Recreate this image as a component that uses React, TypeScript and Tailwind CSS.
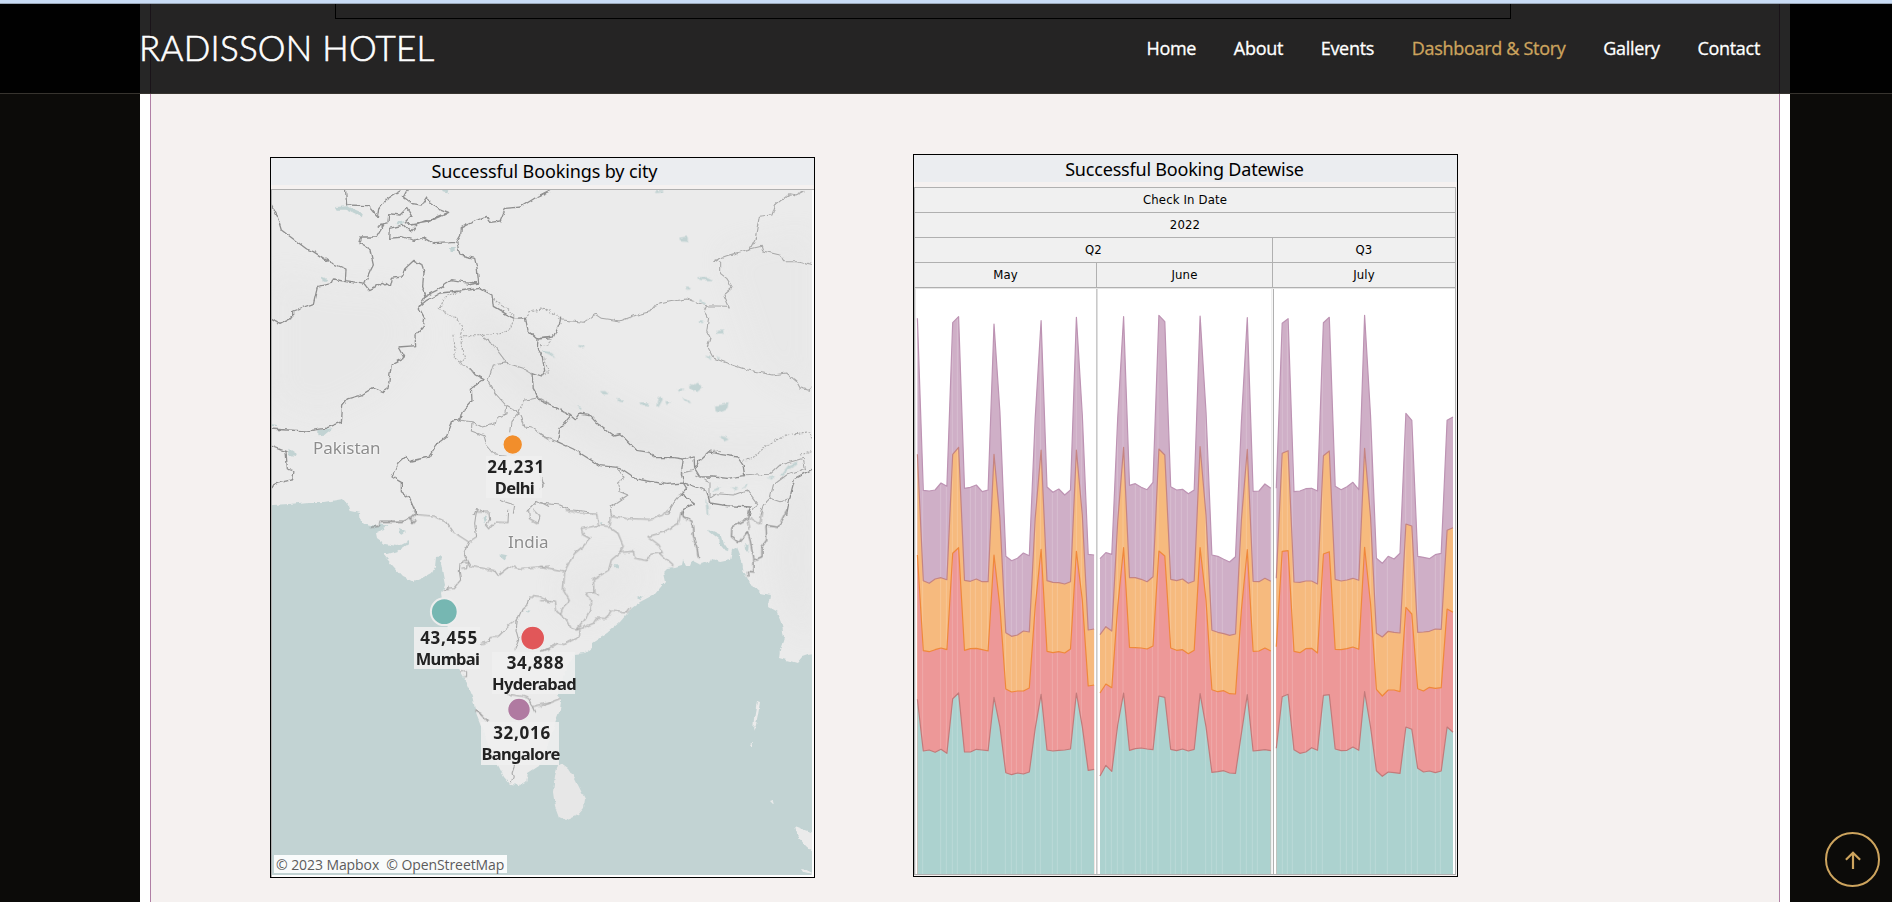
import React from "react";

const NAV = ["Home", "About", "Events", "Dashboard & Story", "Gallery", "Contact"];

type Month = {
  x: number;
  purple: number[];
  orange: number[];
  red: number[];
  teal: number[];
};

// Heights are stored in thirds of a pixel, measured down from y = 510.
const MONTHS: Month[] = [
  {
    x: 917.4,
    purple: [-575, -59, -57, -60, -81, -71, -562, -580, -65, -68, -75, -55, -60, -558, -295, 139, 152, 145, 129, 137, -275, -568, -69, -53, -63, -45, -60, -578, -285, 133, 135],
    orange: [-167, 212, 220, 207, 203, 209, -167, -188, 211, 214, 207, 215, 215, -167, 25, 368, 379, 375, 363, 366, 25, -180, 212, 217, 218, 222, 215, -180, 15, 360, 357],
    red: [135, 422, 425, 419, 414, 419, 130, 113, 421, 416, 415, 419, 423, 135, 290, 537, 546, 543, 543, 534, 290, 118, 424, 428, 425, 429, 417, 124, 270, 528, 525],
    teal: [568, 723, 720, 727, 718, 730, 566, 549, 726, 726, 718, 720, 722, 562, 650, 788, 794, 789, 792, 786, 655, 553, 720, 723, 721, 720, 717, 549, 650, 781, 778],
  },
  {
    x: 1100,
    purple: [146, 128, 133, -275, -580, -74, -79, -68, -61, -83, -584, -565, -70, -60, -62, -49, -60, -582, -295, 135, 139, 148, 156, 140, -265, -577, -56, -57, -78, -65],
    orange: [374, 350, 363, 35, -188, 203, 203, 208, 215, 200, -183, -165, 208, 212, 207, 220, 213, -190, 15, 361, 367, 371, 376, 372, 30, -182, 214, 215, 205, 214],
    red: [549, 522, 533, 290, 113, 412, 413, 414, 417, 408, 123, 138, 414, 421, 419, 431, 421, 113, 270, 539, 545, 542, 551, 552, 300, 119, 424, 423, 414, 423],
    teal: [798, 766, 784, 645, 549, 721, 716, 714, 717, 719, 558, 562, 718, 722, 717, 723, 718, 551, 650, 787, 785, 782, 789, 790, 670, 554, 723, 721, 719, 722],
  },
  {
    x: 1276.3,
    purple: [-65, -560, -574, -55, -57, -64, -65, -57, -562, -578, -71, -61, -70, -83, -61, -584, -285, 145, 160, 139, 147, 130, -290, -269, 139, 142, 146, 134, 130, -269, -279],
    orange: [205, -170, -178, 216, 217, 213, 213, 222, -163, -177, 208, 213, 210, 205, 211, -185, 20, 370, 381, 364, 367, 369, 42, 48, 367, 366, 364, 357, 358, 61, 53],
    red: [410, 124, 122, 424, 428, 416, 415, 429, 132, 125, 418, 419, 416, 411, 418, 112, 280, 538, 558, 540, 540, 545, 292, 312, 536, 543, 532, 535, 533, 297, 307],
    teal: [715, 560, 553, 719, 730, 726, 713, 721, 556, 554, 717, 722, 721, 711, 721, 545, 650, 782, 799, 786, 788, 790, 651, 658, 775, 786, 783, 788, 783, 651, 667],
  },
];

const STEP = 5.89;
const pts = (m: Month, v: number[]) =>
  v.map((y, i) => `${(m.x + i * STEP).toFixed(1)},${(510 + y / 3).toFixed(1)}`);
const area = (m: Month, top: number[]) => {
  const end = m.x + (top.length - 1) * STEP;
  return `M${m.x},874 L${pts(m, top).join(" L")} L${end.toFixed(1)},874Z`;
};
const line = (m: Month, v: number[]) => `M${pts(m, v).join(" L")}`;

const STREAKS = [
  68, 122, 139, 157, 172, 211, 226, 244, 263, 316, 334, 349, 367, 406, 421, 457, 472, 512, 529, 544,
  617, 634, 652, 669, 706, 721, 739, 757, 774, 812, 826, 844, 862, 917, 935, 949, 967, 1021, 1039, 1057, 1072,
  1147, 1162, 1177, 1216, 1234, 1249, 1267, 1321, 1339, 1357, 1372, 1411, 1426, 1462, 1517, 1534, 1552, 1606, 1621,
].map((v) => 900 + v / 3);

function AreaChart() {
  return (
    <svg viewBox="915 288 540 586" className="block h-[586px] w-[540px] bg-white">
      <defs>
        <clipPath id="bands">
          {MONTHS.map((m) => (
            <path key={m.x} d={area(m, m.purple)} />
          ))}
        </clipPath>
      </defs>
      {MONTHS.map((m) => (
        <g key={m.x} strokeLinejoin="round">
          <path d={area(m, m.purple)} fill="#cfafc7" />
          <path d={area(m, m.orange)} fill="#f6ba7e" />
          <path d={area(m, m.red)} fill="#ed9898" />
          <path d={area(m, m.teal)} fill="#acd2cf" />
        </g>
      ))}
      <g clipPath="url(#bands)" stroke="#ffffff" strokeOpacity=".18" strokeWidth="1">
        {STREAKS.map((x) => (
          <path key={x} d={`M${x},288V874`} />
        ))}
      </g>
      {MONTHS.map((m) => (
        <g key={m.x} fill="none" strokeWidth="1.2" strokeLinejoin="round">
          <path d={line(m, m.purple)} stroke="#bd93b3" />
          <path d={line(m, m.orange)} stroke="#c58482" />
          <path d={line(m, m.red)} stroke="#f0883a" />
          <path d={line(m, m.teal)} stroke="#c37a7a" />
        </g>
      ))}
      <path d="M1096.8 288V874" stroke="#c9c9c9" strokeWidth="1.6" />
      <path d="M1273.5 288V874" stroke="#b0b0b0" strokeWidth="1" />
      <path d="M1271.8 288V874" stroke="#ebebeb" strokeWidth="1.2" />
      <path d="M915.5 288V874M915 288.5H1455" stroke="#e6e6e6" />
    </svg>
  );
}

const COAST =
  "M258,176H826V652L808,655L802,657L797,663L790,661L779,658L780,650L784,638L782,625L777,612L768,607L770,595L760,593L753,587L744,573L741,557L737,547L732,550L730,560L720,562L712,559L710,564L703,561L700,565L692,561L690,566L686,566L683,560L682,565L675,567L668,568L663,573L665,582L655,594L640,602L632,608L620,622L607,633L592,643L592,648L585,653L575,654L568,664L562,680L557,695L561,700L560,710L556,720L548,745L539,766L528,773L526,782L518,786L511,785L504,777L499,767L493,757L480,723L475,710L472,695L467,683L463,677L457,667L447,625L442,593L445,585L443,575L441,563L442,556L436,557L435,567L432,573L423,578L414,582L403,577L393,566L383,554L388,554L398,551L407,545L409,540L397,546L385,544L377,538L376,533L384,530L387,524L377,526L371,525L361,523L360,513L350,511L348,505L343,499L325,502L308,502L290,504L258,506Z";

function IndiaMap() {
  return (
    <svg viewBox="272 190 540 685" className="block h-[685px] w-[540px] bg-[#c2d3d3]">
      <defs>
        <filter
          id="rough"
          x="258"
          y="176"
          width="568"
          height="713"
          filterUnits="userSpaceOnUse"
          colorInterpolationFilters="sRGB"
        >
          <feTurbulence type="fractalNoise" baseFrequency=".15" numOctaves="2" seed="4" />
          <feDisplacementMap in="SourceGraphic" scale="4.4" xChannelSelector="R" yChannelSelector="G" />
        </filter>
        <filter id="soft" x="258" y="176" width="568" height="713" filterUnits="userSpaceOnUse">
          <feGaussianBlur stdDeviation="14" />
        </filter>
        <clipPath id="land">
          <path d={COAST} />
        </clipPath>
      </defs>
      <g filter="url(#rough)">
        <path d={COAST} fill="#ebebeb" />
        <path d="M561,763L568,768L575,779L581,791L585,799L584,808L578,815L566,820L559,817L555,806L553,792L555,776L558,765Z" fill="#e7e7e7" />
        <path d="M757,701L760,702L758,714L756,724L753,732L754,718ZM750,744L752,743L752,747ZM770,801L773,800L774,805ZM795,826L803,829L816,834V855L806,846L798,837ZM802,869L808,870L812,874L804,872Z" fill="#ebebeb" />
      </g>
      <g clipPath="url(#land)">
        <g filter="url(#soft)" fill="#dfdfdf" opacity=".38">
          <path d="M272,270L330,285L400,290L420,340L380,390L320,420L272,400Z" opacity=".5" />
          <path d="M470,300L530,340L600,395L700,445L790,440L780,460L690,470L600,450L520,400L470,350Z" />
          <path d="M720,250L812,230V400L760,370Z" opacity=".6" />
          <path d="M790,480L812,470V640L785,610L775,560Z" />
          <path d="M560,570L600,560L640,560L640,590L590,620L560,610Z" opacity=".7" />
        </g>
      </g>
      <g filter="url(#rough)" fill="#c2d3d3">
        <g transform="translate(260 145) scale(.33333)">
          <path d="M225,186L262,184L300,200L308,208L306,220L290,208L262,194L230,194ZM545,134L565,136L562,145L548,142ZM412,230L432,226L430,238L410,238ZM570,306L584,306L584,318L572,318ZM186,398L202,404L198,410L188,410ZM172,856L218,850L190,872L172,874ZM82,908L110,926L108,936L86,932ZM36,838L54,840L54,844L36,843ZM850,618L870,620L870,625L852,624Z" />
        </g>
        <g transform="translate(540 145) scale(.33333)">
          <path d="M345,136L370,136L368,142L350,144ZM418,278L442,275L444,288L420,286ZM474,396L500,396L518,406L480,405ZM438,424L452,426L450,434L438,434ZM480,462L500,478L494,480L478,468ZM472,526L490,526L484,536ZM530,554L550,554L550,566L532,566ZM114,600L134,602L130,610L118,606ZM10,620L36,624L46,636L34,632ZM498,632L516,636L512,645ZM530,628L540,640L534,642ZM450,724L470,710L488,728L470,742L452,732ZM180,738L196,738L206,748L188,748ZM232,762L250,764L246,772L234,770ZM298,772L326,772L322,784L304,782ZM352,784L356,760L366,754L368,764L356,786ZM376,768L390,770L380,780ZM414,732L432,730L428,738L416,740ZM426,756L446,768L450,776L436,770ZM528,782L566,774L562,790L540,800L530,796ZM112,784L122,784L120,796ZM538,872L556,876L566,884L552,890ZM722,990L744,962L776,948L770,960L744,974L728,992ZM680,998L702,994L696,1004ZM520,1034L542,1026L540,1034L522,1038ZM570,1026L596,1030L586,1036ZM604,1028L624,1016L620,1024ZM496,1060L506,1080L508,1110L500,1110Z" />
        </g>
        <g transform="translate(260 510) scale(.33333)">
          <path d="M415,56L438,66L428,74L416,68ZM668,25L684,14L680,30L672,40ZM722,132L742,136L734,152L724,146ZM796,300L812,302L804,308ZM350,50L362,40L382,44L366,60Z" />
        </g>
        <g transform="translate(540 510) scale(.33333)">
          <path d="M504,56L545,76L552,100L566,120L558,126L540,104L538,88L510,66ZM616,98L626,104L624,126L618,118ZM220,166L238,166L232,176ZM290,264L310,256L302,270ZM182,38L190,36L188,46Z" />
        </g>
      </g>
      <g filter="url(#rough)" fill="none" stroke="#8f8f8f" strokeWidth="3.9" strokeLinejoin="round">
        <g transform="translate(260 145) scale(.33333)">
          <path d="M30,170L50,210L64,255L140,312L160,320L210,352L258,372L256,410M26,518L60,538L98,518L98,498L160,476L172,424L214,416L220,402L256,410L314,418L326,434L370,412L388,424L394,400L426,396L434,372L462,346L484,358L492,380L488,425L498,452L530,436L575,404L610,410L656,414L652,376L644,340L600,330L590,292L520,296L490,278L462,286L430,276L386,280L388,250L430,240L452,262L470,240L566,202L536,190L510,172L500,156L484,180L458,176L430,156L444,130M256,126L260,180L324,182L352,216L356,192L376,166L400,150L430,132M314,418L330,380L340,360L330,314L296,294L302,276L350,276L370,242L352,244L384,236L386,206L420,210L440,190L454,212L436,230L452,240L500,232L540,216L566,202M590,292L602,272L604,248L644,228L680,214L692,232L720,228L736,190L782,186L830,156L870,138" />
          <path d="M498,452L476,486L494,520L490,544L468,570L470,602L414,606L432,638L394,658L384,730L370,740L340,728L304,750L262,762L248,780L244,832L196,850L140,858L26,852M476,486L500,466L540,444L600,438L660,430L696,450L700,484L740,508L766,520L796,518L804,556L834,582L832,610L846,630L854,680L844,696L816,686L820,730L838,764L868,775M834,582L870,578M620,420L656,414M26,900L78,920L82,972L102,978L98,1004L60,1012L26,1030" />
          <path d="M630,670L646,690L672,704L634,730L636,768L606,802L600,824L578,828L558,878L530,900L506,936L452,948L440,932L414,956L396,996L424,1012L424,1040L448,1058L470,1110" />
        </g>
        <g transform="translate(540 145) scale(.33333)">
          <path d="M0,768L50,790L92,812L106,824L120,804L146,808L166,830L220,870L240,866L290,916L330,922L340,938L400,938L430,942L462,932L464,970L480,996L520,996L560,1000L614,992L610,962L592,936L540,928L506,920L480,944L464,970M92,812L60,850L52,890L100,912L180,962L240,968L290,1002L380,1018L430,1014L450,1020L500,1038L510,1074L560,1082L634,1086L628,1110M430,1014L424,985L430,942M430,1014L440,1030L424,1046L466,1076L430,1090L424,1110M826,968L764,1000L754,1040L740,1110M0,150L40,130M0,580L40,576L60,530L62,518" />
        </g>
        <g transform="translate(260 510) scale(.33333)">
          <path d="M333,52L358,48L360,34L430,34L452,24L466,12L460,0M646,602L664,612L686,636M452,24L456,38L466,28" />
        </g>
        <g transform="translate(540 510) scale(.33333)">
          <path d="M424,0L430,20L456,34L460,80L470,110L476,146M628,0L622,26L594,42L576,50L574,80L596,98L622,64L630,90L642,150L642,186L622,184L624,200M740,0L714,52L678,46L680,90L666,110L666,140L644,150" />
        </g>
      </g>
      <g filter="url(#rough)" fill="none" stroke="#a8a8a8" strokeWidth="3.2" strokeLinejoin="round">
        <g transform="translate(260 145) scale(.33333)">
          <path d="M666,574L700,600L730,640L740,654L790,670L816,686M740,654L700,660L690,690L684,704L710,750L740,784L776,804L790,766L840,758L870,775M740,784L738,806L710,820L706,836L666,846L636,830L600,826M636,830L634,858L672,872L680,900L706,930L740,934M776,804L756,830L752,862M776,804L794,846L820,850L850,874L870,888M720,1066L764,1080L760,1106M800,1100L830,1066L870,1086M642,1110L650,1090L672,1104M840,1005L850,1020L840,1034" />
          <path d="M604,442L560,450L538,490L556,504L590,520L610,546L600,572L660,572L720,566L752,550L762,520M600,572L606,610L614,640L600,650L640,680M582,572L586,640L610,662M700,462L736,490L766,514M796,518L810,500L870,492" strokeDasharray="6 4" />
        </g>
        <g transform="translate(540 145) scale(.33333)">
          <path d="M62,524L130,532L166,508L184,520L240,528L290,510L330,500L346,480L390,470L440,462L500,482L560,484L568,486L552,450L578,428L560,400L542,386L542,352L524,346L560,332L630,312L664,304L668,318L720,330L734,350L770,350L826,364M630,312L646,280L658,214L696,210L706,180L750,146L768,150L796,136M500,482L492,500L506,520L500,560L510,580L502,604L522,640L560,654L620,674L700,690L740,684L770,710L780,728L806,736L816,722" />
          <path d="M230,964L252,1000L236,1014L240,1040L264,1050L210,1086L214,1110M0,870L52,890M424,985L462,976M466,990L510,1010L510,1060L530,1046L580,1050L620,1036L650,1076L640,1094M614,992L690,988L720,960L790,940L796,970L740,990L700,1020L690,1060L670,1080L660,1110M690,1060L720,1070L750,1060M0,990L8,1020L0,1034M0,1074L60,1080L90,1094L150,1100M424,1046L400,1076L380,1110" />
          <path d="M0,492L20,494L60,522M0,602L24,600L30,582M14,640L24,680L0,695M600,948L640,940L680,900L740,870L810,860L816,884M510,918L546,920M780,930L816,920" strokeDasharray="6 4" />
        </g>
        <g transform="translate(260 510) scale(.33333)">
          <path d="M470,14L520,18L560,36L580,66L626,96L612,128L620,150L600,160L598,184L602,210L580,236L552,240L570,232M620,150L630,168L704,182L714,196L750,168L780,176L820,172L870,168M626,96L650,80L644,40L650,0M650,6L690,6L692,30L676,44L686,56L710,36L744,38L746,0M806,0L808,26L834,40L840,20L820,0M650,404L684,396L690,380L716,378L750,344L772,330L786,298L802,284L808,258L840,262L870,274M772,330L768,360L776,390L764,420M840,426L870,414M742,552L790,560L806,566L824,606L818,590L870,578M600,486L620,482L620,500L610,500M764,766L756,790L760,800L752,820M604,160L622,158L620,176L604,178" />
        </g>
        <g transform="translate(540 510) scale(.33333)">
          <path d="M76,0L120,10L170,12L176,46L206,50L214,16L260,26L330,28L370,16L384,0M424,0L416,40L370,66L324,80L356,104L370,128L334,132L320,152L284,144L280,124L240,128L250,108L234,70L206,50M176,46L124,56L128,74L150,86L130,108L104,130L86,160L74,184L0,168M356,128L400,168M240,128L214,150L206,180L160,206L162,248L136,250L152,270L150,300L134,330L110,360L94,356L80,330L62,314L70,290L88,272L70,240L74,184M162,248L176,256M0,272L46,276L50,304L62,314M110,360L160,340L170,324L200,326L214,300L262,306L272,292M120,360L118,380L70,404L56,400L10,422M0,592L30,578L60,566M624,26L630,60M660,42L666,0M628,22L660,42" />
        </g>
      </g>
      <g stroke="#ededed" strokeWidth="1.2">
        <circle cx="512.7" cy="444.5" r="9.8" fill="#f28e2b" />
        <circle cx="444.3" cy="611.7" r="13.4" fill="#76b7b2" strokeWidth="2" />
        <circle cx="532.7" cy="638.1" r="11.9" fill="#e15759" />
        <circle cx="519" cy="709.5" r="11.3" fill="#b07aa1" />
      </g>
    </svg>
  );
}

function CityLabel({ place, value, city }: { place: string; value: string; city: string }) {
  return (
    <div
      className={`absolute flex flex-col items-center bg-[#f0f0f0]/90 font-['Noto_Sans',sans-serif] leading-[21px] font-bold text-[#222222] ${place}`}
    >
      <span className="pl-[4px] text-[17px] tracking-[0.7px]">{value}</span>
      <span className="pl-[1px] text-[16.5px] tracking-[-0.65px]">{city}</span>
    </div>
  );
}

function CardTitle({ className, children }: { className: string; children: React.ReactNode }) {
  return (
    <h2
      className={`h-[27px] bg-[#ebedf0] text-center font-['Noto_Sans',sans-serif] text-[18px] font-normal text-black ${className}`}
    >
      {children}
    </h2>
  );
}

const HEAD = "flex h-[25px] items-center justify-center border-b border-[#b0b0b0] text-[13px] tracking-[0.15px] text-black";

export default function App() {
  return (
    <div className="relative h-[902px] w-full overflow-hidden bg-[#0c0b09]">
      <main className="ml-[140px] flex h-full w-[1650px] bg-white px-[10px]">
        <div className="flex w-full flex-col border-x border-[#b07fa5] bg-[#f5f1f0]">
          <div className="ml-[184px] h-[19px] w-[1176px] shrink-0 border border-t-0 border-black" />
          <div className="flex items-start pt-[135px] pl-[119px]">
            <section className="mt-[3px] h-[721px] w-[545px] border border-black">
              <CardTitle className="pl-[4px] leading-[27px] tracking-[-0.12px]">Successful Bookings by city</CardTitle>
              <div className="relative mt-[4px] h-[688px] border-t border-l border-[#b0b0b0] bg-white">
                <IndiaMap />
                <span className="absolute top-[247px] left-[41px] font-['Noto_Sans',sans-serif] text-[17px] leading-[22px] text-[#8c8c8c] [text-shadow:0_0_2px_#fff,0_0_2px_#fff]">
                  Pakistan
                </span>
                <span className="absolute top-[341px] left-[236px] font-['Noto_Sans',sans-serif] text-[17px] leading-[22px] text-[#8c8c8c] [text-shadow:0_0_2px_#fff,0_0_2px_#fff]">
                  India
                </span>
                <CityLabel place="left-[214px] top-[266px] h-[42px] w-[56px]" value="24,231" city="Delhi" />
                <CityLabel place="left-[142px] top-[437px] h-[42px] w-[66px]" value="43,455" city="Mumbai" />
                <CityLabel place="left-[220px] top-[462px] h-[42px] w-[83px]" value="34,888" city="Hyderabad" />
                <CityLabel place="left-[209px] top-[532px] h-[43px] w-[78px]" value="32,016" city="Bangalore" />
                <div className="absolute bottom-[4px] left-[2px] h-[18px] w-[233px] bg-white/90 pl-[2px] font-['Open_Sans',sans-serif] text-[14px] leading-[19px] tracking-[-0.08px] whitespace-pre text-[#5c5c5c]">
                  {"© 2023 Mapbox  © OpenStreetMap"}
                </div>
              </div>
            </section>
            <section className="ml-[98px] h-[723px] w-[545px] border border-black">
              <CardTitle className="pr-[2px] leading-[29px] tracking-[-0.2px]">Successful Booking Datewise</CardTitle>
              <div className="mt-[5px] w-[542px] border border-[#b0b0b0] bg-[#f0f0f0] font-['DejaVu_Sans_Condensed','DejaVu_Sans',sans-serif]">
                <div className={HEAD}>Check In Date</div>
                <div className={HEAD}>2022</div>
                <div className="flex">
                  <div className={`${HEAD} w-[358px] border-r`}>Q2</div>
                  <div className={`${HEAD} flex-1`}>Q3</div>
                </div>
                <div className="flex">
                  <div className={`${HEAD} w-[182px] border-r`}>May</div>
                  <div className={`${HEAD} w-[176px] border-r`}>June</div>
                  <div className={`${HEAD} flex-1`}>July</div>
                </div>
                <AreaChart />
              </div>
            </section>
          </div>
        </div>
      </main>

      <header className="absolute inset-x-0 top-0 flex h-[94px] items-center justify-between border-b border-[#37342f] bg-black/85 pt-[3px] pr-[132px] pl-[139px]">
        <h1 className="pb-px font-['Lato',sans-serif] text-[35px] leading-none font-light tracking-[0.25px] whitespace-nowrap text-white [-webkit-text-stroke:0.6px_white]">
          RADISSON HOTEL
        </h1>
        <nav className="flex gap-[37.7px] font-['Open_Sans',sans-serif] text-[18px] tracking-[-0.3px] whitespace-nowrap [-webkit-text-stroke-width:0.3px]">
          {NAV.map((item) => (
            <a key={item} className={item === "Dashboard & Story" ? "text-[#cda45e]" : "text-white"}>
              {item}
            </a>
          ))}
        </nav>
      </header>
      <div className="absolute inset-x-0 top-0 h-[4px] border-b border-[#9aa7b8] bg-[#c9dcf5]" />

      <button className="absolute top-[832px] left-[1825px] flex size-[55px] items-center justify-center rounded-full border-2 border-[#cda45e]">
        <svg viewBox="0 0 16 18" className="h-[18px] w-[16px]" fill="none" stroke="#cda45e" strokeWidth="2.2">
          <path d="M8 18V1.8M.9 8.8L8 1.8L15.1 8.8" />
        </svg>
      </button>
    </div>
  );
}
